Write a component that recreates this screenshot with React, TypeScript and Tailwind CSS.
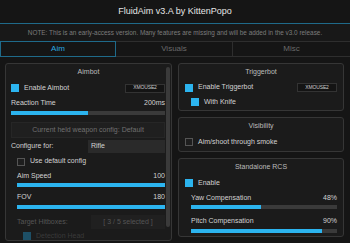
const font = { fontFamily: '"Liberation Sans", Arial, sans-serif' }

function Check({ on, dim }: { on?: boolean; dim?: boolean }) {
  if (on) return <span className={`inline-block w-[8px] h-[8px] shrink-0 ${dim ? 'bg-[#1d4f66]' : 'bg-[#2cb4ef]'}`} />
  return <span className="inline-block w-[8px] h-[8px] shrink-0 border border-[#555] bg-[#1e1e1e]" />
}

function Slider({ pct }: { pct: number }) {
  return (
    <div className="h-[4px] bg-[#3a3a3a] w-full">
      <div className="h-full bg-[#2cb4ef]" style={{ width: `${pct}%` }} />
    </div>
  )
}

function KeyBtn() {
  return (
    <div className="w-[40px] h-[9px] bg-[#141414] border border-[#333] text-[5px] text-[#ccc] flex items-center justify-center tracking-tight">
      XMOUSE2
    </div>
  )
}

function Panel({ title, className, children }: { title: string; className?: string; children: React.ReactNode }) {
  return (
    <div className={`rounded-[3px] border border-[#363636] bg-[#1b1b1b] ${className ?? ''}`}>
      <div className="h-[16px] flex items-center justify-center text-[7px] text-[#bbb]">{title}</div>
      {children}
    </div>
  )
}

export default function App() {
  return (
    <div className="w-[350px] h-[243px] overflow-hidden bg-[#151515] text-[#d2d2d2] text-[7px]" style={font}>
      <div className="h-[24px] flex items-center justify-center text-[9px] text-[#e6e6e6] border-b border-[#1f6a8a]">
        FluidAim v3.A by KittenPopo
      </div>
      <div className="h-[17px] flex items-center justify-center text-[6.4px] text-[#7c7c7c] bg-[#181818]">
        NOTE: This is an early-access version. Many features are missing and will be added in the v3.0 release.
      </div>
      <div className="h-[16px] grid grid-cols-[116px_117px_117px] text-[8px]">
        <div className="border border-[#1f6a8a] flex items-center justify-center text-[#2aa8e0]">Aim</div>
        <div className="border-t border-b border-r border-[#2e2e2e] flex items-center justify-center text-[#6a6a6a]">Visuals</div>
        <div className="border-t border-b border-[#2e2e2e] flex items-center justify-center text-[#6a6a6a]">Misc</div>
      </div>

      <div className="flex pl-[5px] pt-[6px] gap-[6px]">
        {/* left */}
        <Panel title="Aimbot" className="w-[167px] h-[178px] overflow-hidden relative">
          <div className="absolute right-[1px] top-[3px] w-[4px] h-[160px] rounded-full bg-[#3a3a3a]" />
          <div className="pl-[5px] w-[159px]">
            <div className="h-[16px] flex items-center">
              <Check on />
              <span className="ml-[5px] flex-1">Enable Aimbot</span>
              <KeyBtn />
            </div>
            <div className="h-[15px] flex items-center justify-between">
              <span>Reaction Time</span>
              <span>200ms</span>
            </div>
            <Slider pct={50} />
            <div className="mt-[7px] h-[16px] bg-[#1f1f1f] border border-[#262626] flex items-center justify-center text-[#707070]">
              Current held weapon config: Default
            </div>
            <div className="mt-[1px] h-[14px] flex items-center">
              <span className="w-[77px]">Configure for:</span>
              <div className="flex-1 h-[13px] bg-[#2a2a2a] flex items-center pl-[3px]">Rifle</div>
            </div>
            <div className="h-[17px] flex items-center pl-[6px]">
              <Check />
              <span className="ml-[5px]">Use default config</span>
            </div>
            <div className="h-[13px] flex items-center justify-between pl-[6px]">
              <span>Aim Speed</span>
              <span>100</span>
            </div>
            <div className="pl-[6px]"><Slider pct={100} /></div>
            <div className="h-[16px] mt-[2px] flex items-center justify-between pl-[6px]">
              <span>FOV</span>
              <span>180</span>
            </div>
            <div className="pl-[6px]"><Slider pct={100} /></div>
            <div className="mt-[6px] h-[14px] flex items-center pl-[6px] text-[#555]">
              <span className="w-[74px]">Target Hitboxes:</span>
              <div className="flex-1 h-[14px] bg-[#202020] flex items-center justify-center">[ 3 / 5 selected ]</div>
            </div>
            <div className="h-[14px] flex items-center pl-[12px] text-[#3a3a3a]">
              <Check on dim />
              <span className="ml-[5px]">Detection Head</span>
            </div>
          </div>
        </Panel>

        {/* right */}
        <div className="w-[166px] flex flex-col gap-[6px]">
          <Panel title="Triggerbot" className="h-[48px]">
            <div className="px-[6px]">
              <div className="h-[15px] flex items-center">
                <Check on />
                <span className="ml-[5px] flex-1">Enable Triggerbot</span>
                <KeyBtn />
              </div>
              <div className="h-[14px] flex items-center pl-[6px]">
                <Check on />
                <span className="ml-[5px]">With Knife</span>
              </div>
            </div>
          </Panel>
          <Panel title="Visibility" className="h-[35px]">
            <div className="px-[6px] h-[16px] flex items-center">
              <Check />
              <span className="ml-[5px]">Aim/shoot through smoke</span>
            </div>
          </Panel>
          <Panel title="Standalone RCS" className="h-[79px]">
            <div className="px-[6px]">
              <div className="h-[16px] flex items-center">
                <Check on />
                <span className="ml-[5px]">Enable</span>
              </div>
              <div className="pl-[6px]">
                <div className="h-[14px] flex items-center justify-between">
                  <span>Yaw Compensation</span>
                  <span>48%</span>
                </div>
                <Slider pct={48} />
                <div className="h-[20px] flex items-center justify-between pt-[4px]">
                  <span>Pitch Compensation</span>
                  <span>90%</span>
                </div>
                <Slider pct={90} />
              </div>
            </div>
          </Panel>
        </div>
      </div>
    </div>
  )
}
